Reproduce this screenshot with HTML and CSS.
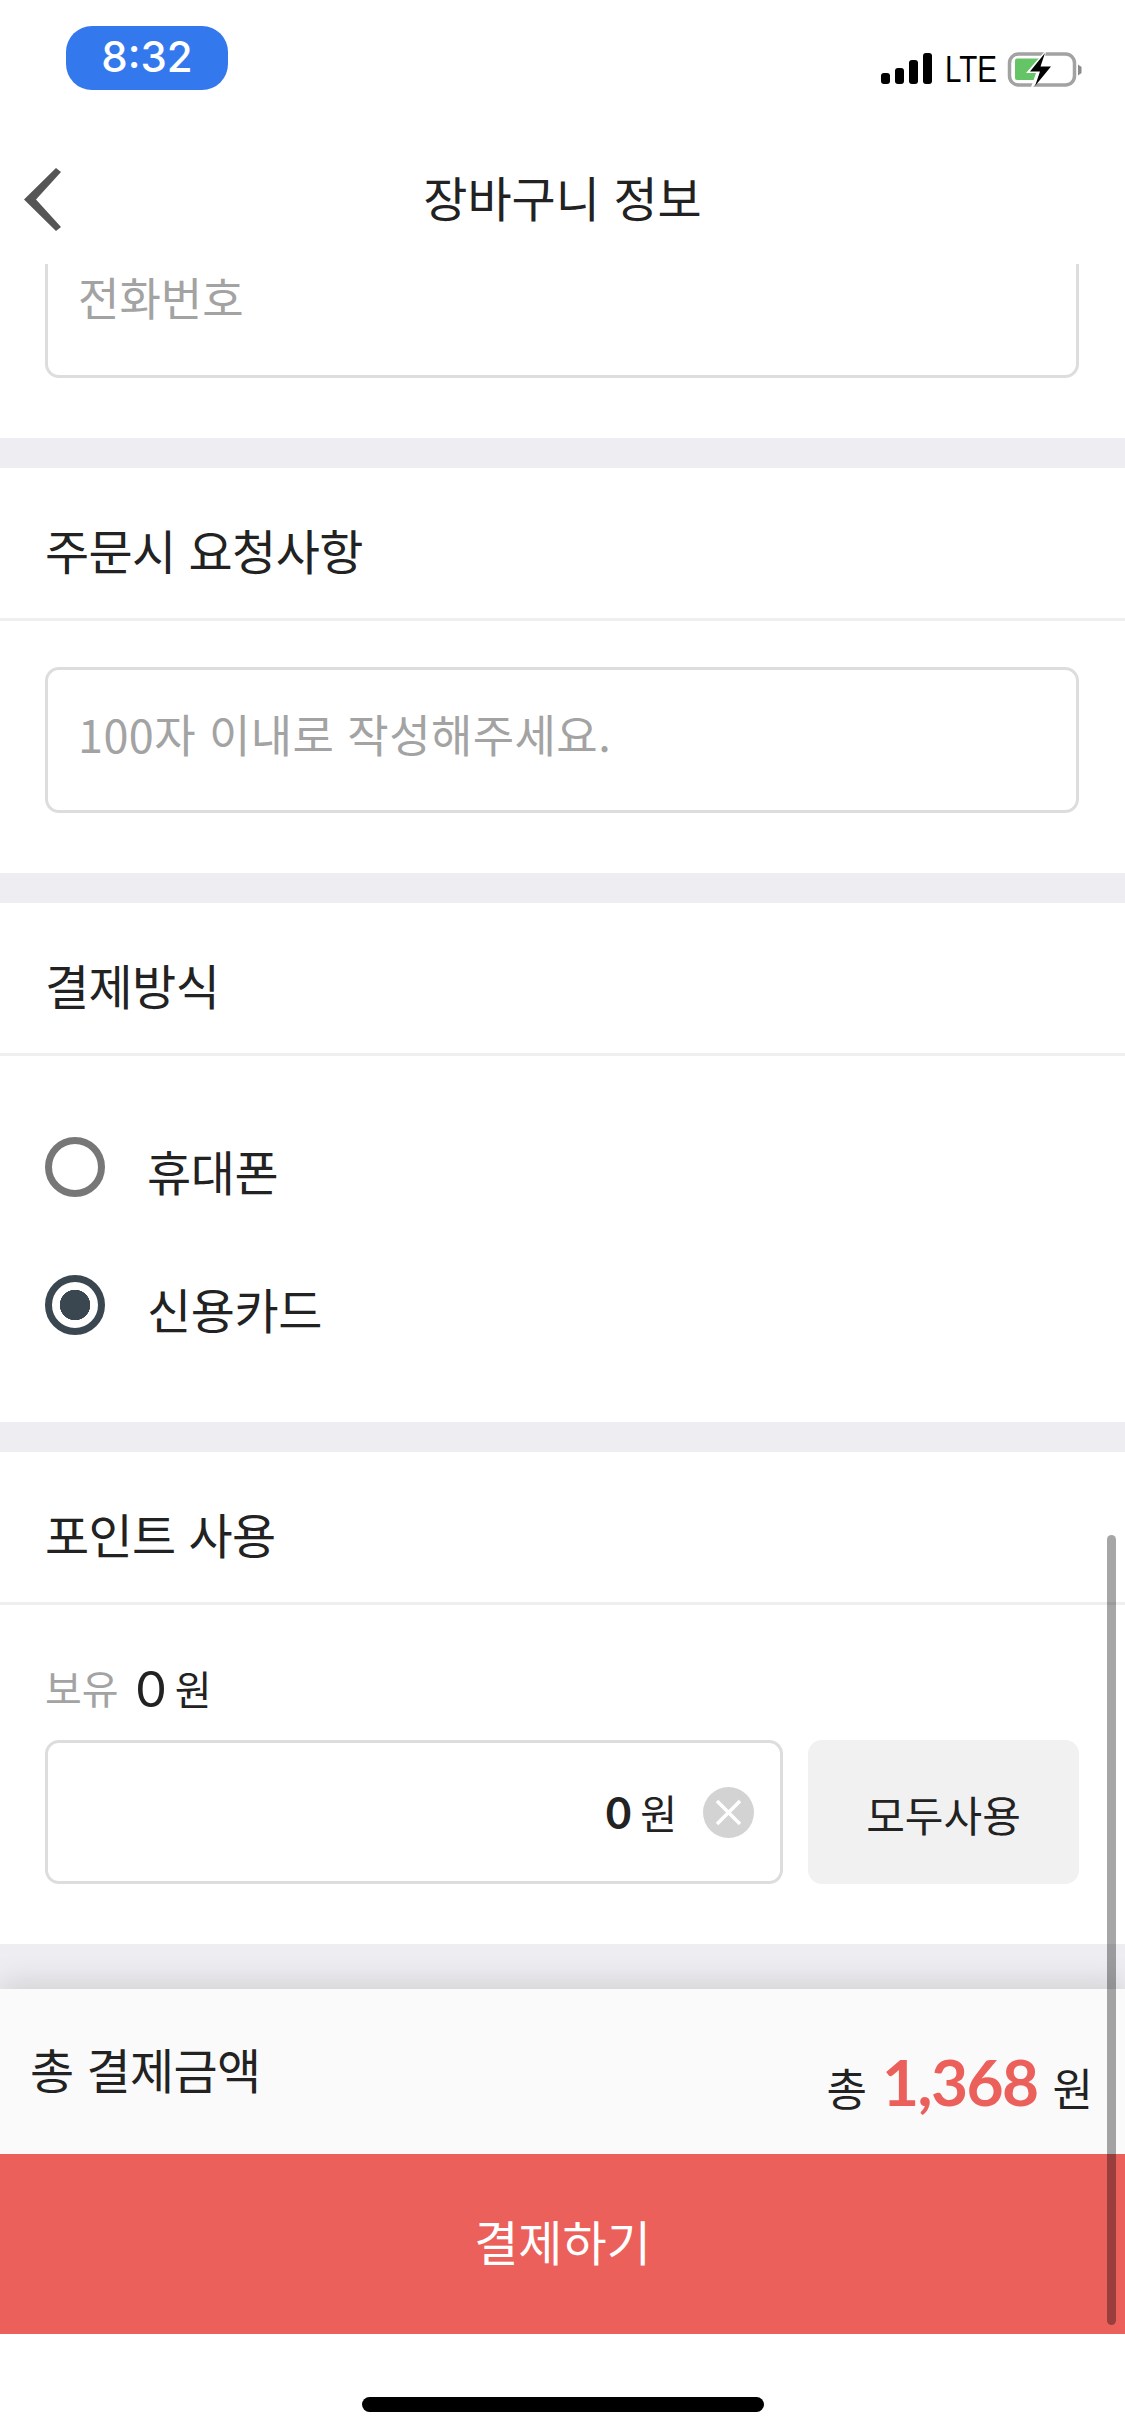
FILE: index.html
```html
<!DOCTYPE html>
<html lang="ko">
<head>
<meta charset="utf-8">
<title>장바구니 정보</title>
<link rel="stylesheet" href="styles.css">
</head>
<body>
<div class="phone">
  <header class="top">
    <div class="status">
      <div class="time">8:32</div>
      <div class="status-right">
        <svg class="signal" width="51" height="31" viewBox="0 0 51 31"><rect x="0" y="20" width="9" height="11" rx="3"/><rect x="14" y="15" width="9" height="16" rx="3"/><rect x="28" y="7" width="9" height="24" rx="3"/><rect x="42" y="0" width="9" height="31" rx="3"/></svg>
        <span class="lte">LTE</span>
        <svg class="battery" width="74" height="36" viewBox="0 0 74 36"><rect x="1.5" y="2" width="65" height="31" rx="9" fill="none" stroke="#a2a2a2" stroke-width="3.5"/><path d="M70 12.5 L73.5 15 V21 L70 23.5Z" fill="#8a8a8a"/><path d="M9 6.5H32V28H9a2 2 0 0 1-2-2V8.500a2 2 0 0 1 2-2Z" fill="#65c466"/><path d="M38 -2 L18 21 H28 L22 38 L46 13 H36 Z" fill="#fff"/><path d="M37 1 L22 19.500 H32 L27 34 L43 14.500 H32.500 Z" fill="#000"/></svg>
      </div>
    </div>
    <nav class="nav">
      <svg class="back" width="38" height="64" viewBox="0 0 38 64"><polygon points="32,0 37,4 12,31.500 37,59 32,63 0,31.500" fill="#555"/></svg>
      <h1 class="title">장바구니 정보</h1>
    </nav>
  </header>
  <main class="scroll">
    <section class="body body-first">
      <div class="field field-clipped">전화번호</div>
    </section>
    <section class="block">
      <h2 class="heading">주문시 요청사항</h2>
      <div class="body">
        <div class="field">100자 이내로 작성해주세요.</div>
      </div>
    </section>
    <section class="block">
      <h2 class="heading">결제방식</h2>
      <div class="radios">
        <div class="radio"><span class="dot"></span><span class="radio-label">휴대폰</span></div>
        <div class="radio radio-on"><span class="dot"></span><span class="radio-label">신용카드</span></div>
      </div>
    </section>
    <section class="block">
      <h2 class="heading">포인트 사용</h2>
      <div class="body body-points">
        <div class="owned"><span class="owned-label">보유</span><span class="owned-num">0</span><span class="owned-unit">원</span></div>
        <div class="point-row">
          <div class="point-input">
            <b class="point-num">0</b><span class="point-unit">원</span>
            <span class="clear"><svg width="51" height="51" viewBox="0 0 51 51"><path d="M14 14 L37 37 M37 14 L14 37" stroke="#fff" stroke-width="3.500" fill="none"/></svg></span>
          </div>
          <div class="use-all">모두사용</div>
        </div>
      </div>
    </section>
    <div class="band"></div>
  </main>
  <footer class="footer">
    <div class="total">
      <span class="total-label">총 결제금액</span>
      <span class="total-value"><span>총</span><b class="amount">1,368</b><span>원</span></span>
    </div>
    <div class="pay">결제하기</div>
    <div class="home"><span class="home-bar"></span></div>
  </footer>
  <div class="scrollbar"></div>
</div>
</body>
</html>
```
FILE: styles.css
```css
* { box-sizing: border-box; }
html, body { margin: 0; padding: 0; background: #fff; }
body { font-family: "Noto Sans CJK KR", "Noto Sans", sans-serif; color: #222; }
.phone { position: relative; width: 1125px; height: 2436px; display: flex; flex-direction: column; overflow: hidden; background: #fff; }

.top { height: 264px; flex: none; background: #fff; position: relative; z-index: 1; }
.status { height: 100px; display: flex; justify-content: space-between; padding: 26px 43px 0 66px; }
.time { width: 162px; height: 64px; border-radius: 26px; background: #3478ee; color: #fff; font: 500 42px/62px Inter, sans-serif; text-align: center; }
.status-right { display: flex; align-items: flex-start; margin-top: 26px; gap: 13px; }
.signal { margin-top: 1px; fill: #000; }
.lte { font: 400 37px/34px "Liberation Sans", sans-serif; color: #000; width: 50px; margin-top: 1px; transform: scaleX(.8); transform-origin: left center; }
.battery { overflow: visible; }
.nav { height: 164px; position: relative; display: flex; justify-content: center; padding-top: 61px; }
.back { position: absolute; left: 24px; top: 68px; }
.title { margin: 0; font-size: 48px; font-weight: 400; line-height: 70px; }

.scroll { flex: 1; min-height: 0; overflow: hidden; }
.body { padding: 46px 46px 60px 45px; }
.body-first { padding-top: 0; margin-top: -30px; }
.block { border-top: 30px solid #eeeef2; }
.heading { margin: 0; height: 153px; padding: 46px 45px 0; font-size: 48px; font-weight: 400; letter-spacing: -0.6px; line-height: 70px; border-bottom: 3px solid #efefef; }
.field { height: 146px; border: 3px solid #ddd; border-radius: 14px; padding: 31px 30px 0; font-size: 45px; letter-spacing: 0.4px; line-height: 66px; color: #a3a3a3; }
.field-clipped { height: 144px; padding-top: 27px; letter-spacing: 0; }

.radios { padding: 81px 45px 87px; display: flex; flex-direction: column; gap: 78px; }
.radio { display: flex; align-items: center; gap: 42px; height: 60px; font-size: 48px; letter-spacing: -0.4px; }
.radio-label { padding-top: 6px; }
.dot { width: 60px; height: 60px; border-radius: 50%; border: 7px solid #777; flex: none; }
.radio-on .dot { border-color: #3a4750; background: radial-gradient(circle, #3a4750 0 15px, #fff 15.5px); }

.body-points { padding-top: 52px; padding-bottom: 60px; }
.owned { display: flex; align-items: flex-start; height: 83px; line-height: 60px; padding-top: 1px; }
.owned-label { font-size: 40px; color: #a3a3a3; margin-top: -1px; line-height: 60px; }
.owned-num { font: 400 50px/60px Lato, sans-serif; margin-left: 18px; }
.owned-unit { font-size: 40px; margin-left: 9px; line-height: 60px; }
.point-row { display: flex; gap: 25px; }
.point-input { width: 738px; height: 144px; border: 3px solid #ddd; border-radius: 14px; display: flex; align-items: center; justify-content: flex-end; padding-right: 26px; }
.point-num { font: 700 44px/50px Lato, sans-serif; }
.point-unit { font-size: 40px; margin-left: 9px; }
.clear { width: 51px; height: 51px; border-radius: 50%; background: #d3d3d3; margin-left: 26px; display: block; }
.clear svg { display: block; }
.use-all { width: 271px; height: 144px; background: #f1f1f1; border-radius: 14px; display: flex; align-items: center; justify-content: center; font-size: 42px; padding-top: 2px; }
.band { height: 45px; background: #eeeef2; }

.footer { flex: none; position: relative; z-index: 1; box-shadow: 0 -6px 28px rgba(0,0,0,.13); background: #fff; }
.total { height: 165px; background: #fafafa; display: flex; justify-content: space-between; padding: 0 32px 0 30px; }
.total-label { font-size: 48px; letter-spacing: -0.6px; line-height: 70px; padding-top: 44px; }
.total-value { display: flex; align-items: baseline; gap: 15px; font-size: 44px; padding-top: 60px; height: 128px; }
.amount { font: 700 64px/66px Lato, sans-serif; letter-spacing: -1.6px; color: #ec605c; }
.pay { height: 180px; background: #ec605c; color: #fff; font-size: 48px; display: flex; align-items: center; justify-content: center; padding-bottom: 8px; }
.home { height: 102px; background: #fff; padding-top: 63px; display: flex; justify-content: center; }
.home-bar { width: 402px; height: 15px; border-radius: 8px; background: #000; }

.scrollbar { position: absolute; z-index: 2; left: 1107px; top: 1535px; width: 9px; height: 790px; border-radius: 5px; background: rgba(0,0,0,.35); }
```
